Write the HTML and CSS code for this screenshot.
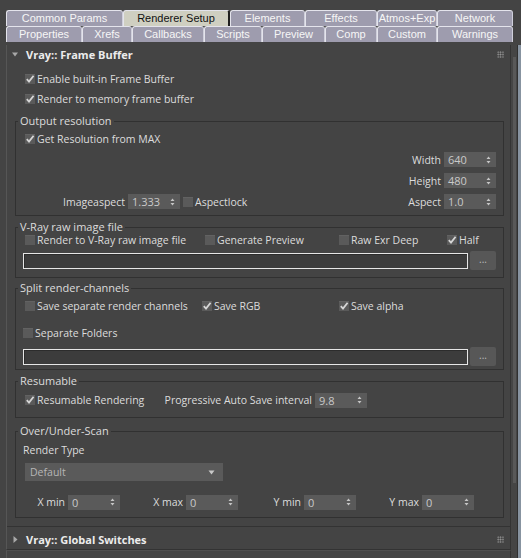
FILE: index.html
```html
<!DOCTYPE html>
<html>
<head>
<meta charset="utf-8">
<link rel="stylesheet" href="styles.css">
</head>
<body>
<div class="win">
  <div class="tabs">
    <div class="tabrow row1">
      <div class="tab">Common Params</div>
      <div class="tab sel">Renderer Setup</div>
      <div class="tab">Elements</div>
      <div class="tab">Effects</div>
      <div class="tab">Atmos+Exp</div>
      <div class="tab">Network</div>
    </div>
    <div class="tabrow row2">
      <div class="tab">Properties</div>
      <div class="tab">Xrefs</div>
      <div class="tab">Callbacks</div>
      <div class="tab">Scripts</div>
      <div class="tab">Preview</div>
      <div class="tab">Comp</div>
      <div class="tab">Custom</div>
      <div class="tab">Warnings</div>
    </div>
  </div>
  <div class="main">
    <div class="scroll">
      <div class="rollout">
        <div class="ro-head">
          <svg class="tri" width="6" height="5" viewBox="0 0 6 5"><path d="M0 0.5 H6 L3 4.5Z" fill="#a8a8a8"/></svg>
          <span class="ro-title">Vray:: Frame Buffer</span>
          <span class="grip"></span>
        </div>
        <div class="ro-body">
          <div class="row top h20">
            <label class="cb"><span class="box on"><svg viewBox="0 0 10 10"><path d="M1.8 5.2 L4 7.6 L8.6 1.8" /></svg></span>Enable built-in Frame Buffer</label>
          </div>
          <div class="row top h20">
            <label class="cb"><span class="box on"><svg viewBox="0 0 10 10"><path d="M1.8 5.2 L4 7.6 L8.6 1.8" /></svg></span>Render to memory frame buffer</label>
          </div>

          <fieldset class="grp g-out">
            <legend>Output resolution</legend>
            <div class="row h20">
              <label class="cb"><span class="box on"><svg viewBox="0 0 10 10"><path d="M1.8 5.2 L4 7.6 L8.6 1.8" /></svg></span>Get Resolution from MAX</label>
            </div>
            <div class="row h21 right">
              <span class="lbl">Width</span>
              <div class="spin"><span>640</span><svg class="arr" width="5" height="8" viewBox="0 0 5 8"><path d="M2.5 0.5 L4.5 3 H0.5Z M2.5 7.5 L4.5 5 H0.5Z"/></svg></div>
            </div>
            <div class="row h21 right">
              <span class="lbl">Height</span>
              <div class="spin"><span>480</span><svg class="arr" width="5" height="8" viewBox="0 0 5 8"><path d="M2.5 0.5 L4.5 3 H0.5Z M2.5 7.5 L4.5 5 H0.5Z"/></svg></div>
            </div>
            <div class="row h21 split-ends">
              <div class="iagroup">
                <span class="lbl ia">Imageaspect</span>
                <div class="spin"><span>1.333</span><svg class="arr" width="5" height="8" viewBox="0 0 5 8"><path d="M2.5 0.5 L4.5 3 H0.5Z M2.5 7.5 L4.5 5 H0.5Z"/></svg></div>
                <label class="cb lock"><span class="box"></span>Aspectlock</label>
              </div>
              <div class="asgroup">
                <span class="lbl">Aspect</span>
                <div class="spin"><span>1.0</span><svg class="arr" width="5" height="8" viewBox="0 0 5 8"><path d="M2.5 0.5 L4.5 3 H0.5Z M2.5 7.5 L4.5 5 H0.5Z"/></svg></div>
              </div>
            </div>
          </fieldset>

          <fieldset class="grp g-raw">
            <legend>V-Ray raw image file</legend>
            <div class="row h14 raw-cols">
              <label class="cb"><span class="box"></span>Render to V-Ray raw image file</label>
              <label class="cb"><span class="box"></span>Generate Preview</label>
              <label class="cb"><span class="box"></span>Raw Exr Deep</label>
              <label class="cb"><span class="box on"><svg viewBox="0 0 10 10"><path d="M1.8 5.2 L4 7.6 L8.6 1.8" /></svg></span>Half</label>
            </div>
            <div class="row h19 filerow">
              <div class="path"></div>
              <div class="btn">...</div>
            </div>
          </fieldset>

          <fieldset class="grp g-split">
            <legend>Split render-channels</legend>
            <div class="row h18 split-cols">
              <label class="cb"><span class="box"></span>Save separate render channels</label>
              <label class="cb"><span class="box on"><svg viewBox="0 0 10 10"><path d="M1.8 5.2 L4 7.6 L8.6 1.8" /></svg></span>Save RGB</label>
              <label class="cb"><span class="box on"><svg viewBox="0 0 10 10"><path d="M1.8 5.2 L4 7.6 L8.6 1.8" /></svg></span>Save alpha</label>
            </div>
            <div class="row h18 folders">
              <label class="cb"><span class="box"></span>Separate Folders</label>
            </div>
            <div class="row h19 filerow f2">
              <div class="path"></div>
              <div class="btn">...</div>
            </div>
          </fieldset>

          <fieldset class="grp g-res">
            <legend>Resumable</legend>
            <div class="row h18">
              <label class="cb resum"><span class="box on"><svg viewBox="0 0 10 10"><path d="M1.8 5.2 L4 7.6 L8.6 1.8" /></svg></span>Resumable Rendering</label>
              <span class="lbl prog">Progressive Auto Save interval</span>
              <div class="spin"><span>9.8</span><svg class="arr" width="5" height="8" viewBox="0 0 5 8"><path d="M2.5 0.5 L4.5 3 H0.5Z M2.5 7.5 L4.5 5 H0.5Z"/></svg></div>
            </div>
          </fieldset>

          <fieldset class="grp g-scan">
            <legend>Over/Under-Scan</legend>
            <div class="row h16 rtype">Render Type</div>
            <div class="row h18 ddrow">
              <div class="dd"><span>Default</span><svg width="7" height="5" viewBox="0 0 7 5"><path d="M0.5 0.5 H6.5 L3.5 4.5Z"/></svg></div>
            </div>
            <div class="row h18 xy">
              <span class="lbl c1">X min</span>
              <div class="spin"><span>0</span><svg class="arr" width="5" height="8" viewBox="0 0 5 8"><path d="M2.5 0.5 L4.5 3 H0.5Z M2.5 7.5 L4.5 5 H0.5Z"/></svg></div>
              <span class="lbl cn">X max</span>
              <div class="spin"><span>0</span><svg class="arr" width="5" height="8" viewBox="0 0 5 8"><path d="M2.5 0.5 L4.5 3 H0.5Z M2.5 7.5 L4.5 5 H0.5Z"/></svg></div>
              <span class="lbl cn">Y min</span>
              <div class="spin"><span>0</span><svg class="arr" width="5" height="8" viewBox="0 0 5 8"><path d="M2.5 0.5 L4.5 3 H0.5Z M2.5 7.5 L4.5 5 H0.5Z"/></svg></div>
              <span class="lbl cn">Y max</span>
              <div class="spin"><span>0</span><svg class="arr" width="5" height="8" viewBox="0 0 5 8"><path d="M2.5 0.5 L4.5 3 H0.5Z M2.5 7.5 L4.5 5 H0.5Z"/></svg></div>
            </div>
          </fieldset>
        </div>
      </div>
      <div class="rollout closed">
        <div class="ro-head">
          <svg class="tri" width="5" height="7" viewBox="0 0 5 7"><path d="M0.5 0 V7 L4.5 3.5Z" fill="#a8a8a8"/></svg>
          <span class="ro-title">Vray:: Global Switches</span>
          <span class="grip"></span>
        </div>
      </div>
      <div class="rollout next"></div>
    </div>
    <div class="vscroll"><div class="thumb"></div></div>
    <div class="edge"></div>
  </div>
</div>
</body>
</html>
```

FILE: styles.css
```css
* { box-sizing: border-box; margin: 0; padding: 0; }
body {
  margin: 0;
  background: #444444;
  font-family: "Open Sans", "Liberation Sans", sans-serif;
  font-size: 10.5px;
  color: #dcdcdc;
}
.win {
  width: 521px;
  height: 558px;
  overflow: hidden;
  background: #444444;
  display: flex;
  flex-direction: column;
}

/* tabs */
.tabs { padding: 10px 0 0 6px; height: 45px; flex: none; }
.tabrow { display: grid; }
.row1 { grid-template-columns: 117px 107px 75px 72px 60px 76px; height: 16px; }
.row2 { grid-template-columns: 76px 50px 72px 58px 63px 52px 60px 76px; height: 16px; }
.tab {
  background: #9e9cae;
  color: #f6f6f6;
  font-family: "Liberation Sans", sans-serif;
  font-size: 11px;
  line-height: 15px;
  text-align: center;
  border: 1px solid #e4e4ec;
  border-bottom: none;
  border-right-color: #cfcfdb;
  border-radius: 3px 3px 0 0;
  white-space: nowrap;
  overflow: hidden;
}
.tab.sel {
  background: #cfcfc1;
  color: #111;
  border-right: 2px solid #1e1e1e;
}

/* main */
.main { flex: 1; display: flex; min-height: 0; }
.scroll {
  width: 511px;
  padding-left: 6px;
  display: flex;
  flex-direction: column;
  flex: none;
}
.rollout {
  width: 505px;
  border-left: 1px solid #565656;
  border-right: 1px solid #343434;
  flex: none;
}
.ro-head {
  height: 18px;
  display: flex;
  align-items: center;
  padding-left: 5px;
  padding-right: 6px;
}
.tri { margin-right: 8px; flex: none; }
.ro-title {
  font-family: "Open Sans", "Liberation Sans", sans-serif;
  font-weight: 700;
  font-size: 11px;
  color: #ececec;
  flex: 1;
}
.grip {
  width: 7px;
  height: 7px;
  background-image: radial-gradient(circle, #9a9a9a 0.7px, transparent 0.9px);
  background-size: 2.4px 2.4px;
}
.ro-body {
  padding: 6px 6px 8px 8px;
  border-bottom: 1px solid #333;
}
.closed {
  border-bottom: 1px solid #333;
}
.closed .ro-head { height: 22px; padding-top: 3px; }
.closed .tri { margin-left: 1px; margin-right: 8px; }
.next { height: 10px; border-top: 1px solid #4e4e4e; }

/* rows */
.row { display: flex; align-items: center; white-space: nowrap; }
.h14 { height: 14px; }
.h16 { height: 16px; }
.h18 { height: 18px; }
.h19 { height: 19px; }
.h20 { height: 20px; }
.h21 { height: 21px; }
.top { margin-left: 10px; }
.right { justify-content: flex-end; }
.split-ends { justify-content: space-between; }

.cb { display: flex; align-items: center; }
.box {
  width: 10px;
  height: 10px;
  background: #5a5a5a;
  border-top: 1px solid #626262;
  margin-right: 2px;
  flex: none;
  position: relative;
}
.box svg {
  width: 10px;
  height: 10px;
  display: block;
  margin-top: -1px;
}
.box svg path {
  fill: none;
  stroke: #d6d6d6;
  stroke-width: 1.8;
}

.lbl { color: #dcdcdc; }
.spin {
  width: 52px;
  height: 15px;
  background: #5a5a5a;
  color: #c9c9c9;
  display: flex;
  align-items: center;
  justify-content: space-between;
  padding: 0 5px 0 4px;
  margin-left: 3px;
  flex: none;
  font-size: 11px;
}
.spin .arr path { fill: #c6c6c6; }

/* group boxes */
.grp {
  border: 1px solid #313131;
  padding: 0 7px 0 9px;
  min-width: 0;
}
.grp legend {
  line-height: 12px;
  padding: 0 2px;
  margin-left: -7px;
  color: #dcdcdc;
  font-size: 11px;
}
.g-out { margin-top: 6px; padding-top: 2px; padding-bottom: 3px; }
.g-raw { margin-top: 5px; padding-bottom: 7px; }
.g-split { margin-top: 4px; padding-bottom: 3px; }
.g-res { margin-top: 5px; padding-bottom: 8px; }
.g-scan { margin-top: 7px; padding-bottom: 6px; }

.iagroup { display: flex; align-items: center; }
.ia { width: 100px; text-align: right; }
.lock { margin-left: 3px; }
.asgroup { display: flex; align-items: center; }

.raw-cols { display: grid; grid-template-columns: 180px 134px 108px auto; }
.split-cols { display: grid; grid-template-columns: 177px 137px auto; margin-top: 3px; }
.folders { margin-top: 9px; margin-left: -2px; }
.filerow { margin-top: 4px; margin-left: -2px; }
.f2 { margin-top: 5px; }
.path {
  width: 446px;
  height: 16px;
  border: 1px solid #e6e6e6;
  background: #3c3c3c;
  box-shadow: inset 1px 1px 0 #2c2c2c;
}
.btn {
  width: 26px;
  height: 19px;
  margin-left: 2px;
  background: #575757;
  border-radius: 2px;
  color: #bcbcbc;
  text-align: center;
  line-height: 17px;
  font-size: 10px;
}

.g-res .row { margin-top: 4px; }
.resum { width: 138px; }
.prog { width: 149px; text-align: right; }

.rtype { margin-top: 5px; margin-left: -2px; }
.ddrow { margin-top: 5px; }
.dd {
  width: 198px;
  height: 18px;
  background: #5a5a5a;
  display: flex;
  align-items: center;
  justify-content: space-between;
  padding: 0 8px 0 5px;
  color: #b6b6b6;
}
.dd svg path { fill: #c8c8c8; }
.xy { margin-top: 12px; }
.c1 { width: 40px; text-align: right; }
.cn { width: 63px; text-align: right; }

/* scrollbar */
.vscroll {
  width: 7px;
  flex: none;
  background: #454545;
  border-right: 1px solid #303030;
  padding: 12px 1px 0 2px;
}
.thumb { height: 426px; background: #585858; }
.edge { flex: 1; background: #8793a0; }
```
